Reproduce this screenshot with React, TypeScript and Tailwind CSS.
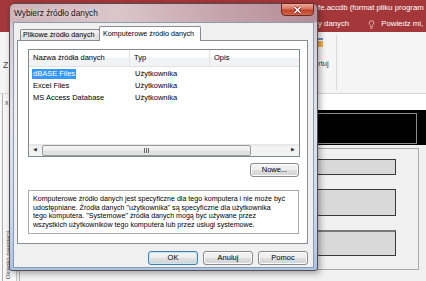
import { Lightbulb } from 'lucide-react';

// Win7-style push button used in the dialog
const DlgButton = ({ label, isDefault }: { label: string; isDefault?: boolean }) => (
  <div
    className={
      isDefault
        ? 'w-[50px] h-[14px] flex items-center justify-center rounded-[3px] border border-[#3c7fb1] shadow-[inset_0_0_0_1px_#c4e6f7] bg-[linear-gradient(180deg,#f4f4f4_0%,#ececec_50%,#dfdfdf_51%,#d3d3d3_100%)]'
      : 'w-[50px] h-[14px] flex items-center justify-center rounded-[3px] border border-[#8a8a8a] shadow-[inset_0_0_0_1px_#fbfbfb] bg-[linear-gradient(180deg,#f4f4f4_0%,#ececec_50%,#dfdfdf_51%,#d3d3d3_100%)]'
    }
  >
    {label}
  </div>
);

const rows = [
  { name: 'dBASE Files', type: 'Użytkownika', selected: true },
  { name: 'Excel Files', type: 'Użytkownika' },
  { name: 'MS Access Database', type: 'Użytkownika' },
];

const App = () => {
  return (
    <div className="relative w-[426px] h-[281px] overflow-hidden bg-[#f0f0f0] font-['Liberation_Sans',Arial,sans-serif] text-[7.5px] text-black">
      {/* Access window in the background */}
      <div className="flex flex-col h-full">
        <div className="h-[32px] bg-[#a4373a] text-white flex flex-col">
          <div className="h-[16px] pl-[318px] pt-[3px] text-[7.8px] leading-[10px] whitespace-nowrap">
            fe.accdb (format pliku program
          </div>
          <div className="h-[16px] pl-[318px] flex items-center gap-[6px] text-[7.8px] whitespace-nowrap">
            <span>y danych</span>
            <span className="ml-[12px] flex items-center gap-[5px]">
              <Lightbulb size={9} strokeWidth={1.6} />
              Powiedz mi,
            </span>
          </div>
        </div>

        <div className="h-[62px] bg-[#f5f5f5] border-b border-[#d5d5d5] flex">
          <div className="w-[10px] pl-[3px] pt-[27px] text-[8.5px] text-[#444]">Z</div>
          <div className="ml-[304px] pt-[4px] w-[22px] flex flex-col items-start">
            <svg width="10" height="14" viewBox="0 0 10 14">
              <rect x="2" y="2" width="7" height="2" fill="#6d8fb8" />
              <rect x="4" y="5" width="5" height="6" fill="#f0b143" />
              <path d="M0 7h4M2.5 5.5L4 7l-1.5 1.5" stroke="#2f6fb8" strokeWidth="1.2" fill="none" />
            </svg>
            <span className="mt-[8px] text-[7.5px] text-[#333] whitespace-nowrap">ortuj</span>
            <span className="text-[6px] text-[#555] leading-[8px]">▾</span>
          </div>
          <div className="w-px h-[55px] mt-[3px] bg-[#dadada]" />
        </div>

        <div className="flex-1 flex">
          {/* navigation pane (collapsed) */}
          <div className="w-[17px] bg-[#f7f7f7] border-r border-[#c6c6c6] flex flex-col">
            <div className="ml-[2px] flex-1 border-l border-[#b0b0b0] flex flex-col">
              <span className="pl-[2px] pt-[4px] text-[7px] text-[#555]">x</span>
              <span className="mt-auto mb-[2px] ml-[1px] [writing-mode:vertical-rl] rotate-180 text-[6px] text-[#444] whitespace-nowrap">
                Okienko nawigacji
              </span>
            </div>
          </div>
          <div className="w-[2px]" />
          <div className="flex-1 border-l border-[#b0b0b0] flex flex-col">
            <div className="h-[16px] bg-white" />
            <div className="h-[35px] bg-black pt-[3px] pr-[9px]">
              <div className="h-[31px] border border-[#8a8a8a]" />
            </div>
            <div className="pt-[3px] pr-[7px]">
              <div className="h-[122px] border border-[#a8a8a8] pt-[10px] pr-[22px] flex flex-col items-end gap-[14px]">
                <div className="w-[180px] h-[16px] bg-[#d9d9d9] border border-[#3a3a3a]" />
                <div className="w-[180px] h-[27px] bg-[#d9d9d9] border border-[#3a3a3a] border-t-dotted" />
                <div className="w-[180px] h-[26px] bg-[#d9d9d9] border border-[#3a3a3a] border-t-2 border-t-[#7a7a7a]" />
              </div>
            </div>
          </div>
        </div>
      </div>

      {/* Dialog window */}
      <div className="absolute left-[9px] top-[3px] w-[309px] h-[268px] rounded-t-[6px] rounded-b-[3px] border border-[#5a4a52] bg-[linear-gradient(180deg,#c9a9ae_0%,#d6cbd0_10%,#dde5ee_45%,#c6d8ec_80%,#a8c4e4_100%)] flex flex-col shadow-[2px_2px_6px_rgba(0,0,0,0.35)]">
        <div className="relative h-[18px] rounded-t-[5px] bg-[linear-gradient(90deg,rgba(205,178,182,0.9)_0%,rgba(220,200,204,0.9)_35%,rgba(196,160,168,0.9)_70%,rgba(178,136,146,0.9)_100%)] pl-[4px] flex items-center">
          <span className="text-[8.3px] text-[#111] [text-shadow:0_0_5px_rgba(255,255,255,0.9)] whitespace-nowrap">
            Wybierz źródło danych
          </span>
          <div className="absolute right-[3px] top-[-1px] w-[33px] h-[13px] rounded-b-[4px] border border-[#6d2a22] bg-[linear-gradient(180deg,#e9a898_0%,#d9735e_45%,#c2412a_55%,#d2664c_100%)] flex items-center justify-center">
            <svg width="9" height="8" viewBox="0 0 9 8">
              <path d="M1.5 1l6 6M7.5 1l-6 6" stroke="#5a1c14" strokeWidth="2.6" />
              <path d="M1.5 1l6 6M7.5 1l-6 6" stroke="#ffffff" strokeWidth="1.6" />
            </svg>
          </div>
        </div>

        {/* client area */}
        <div className="mx-[3px] h-[246px] border border-[#8c9bb0] bg-[#f0f0f0] px-[3px] pt-[3px] flex flex-col">
          {/* tab strip */}
          <div className="h-[14px] pl-[3px] flex items-end relative z-10 text-[7.2px]">
            <div className="w-[80px] h-[11px] border border-b-0 border-[#898c95] rounded-t-[2px] bg-[linear-gradient(180deg,#f3f3f3_0%,#ebebeb_50%,#dedede_51%,#e4e4e4_100%)] pl-[2px] leading-[10px] whitespace-nowrap overflow-hidden">
              Plikowe źródło danych
            </div>
            <div className="-ml-px w-[102px] h-[15px] -mb-px border border-b-0 border-[#898c95] rounded-t-[2px] bg-white pl-[3px] pt-[2px] leading-[10px] whitespace-nowrap">
              Komputerowe źródło danych
            </div>
          </div>

          {/* tab panel */}
          <div className="w-[291px] h-[204px] border border-[#898c95] bg-white pl-[10px] pr-[7px] pt-[8px] flex flex-col">
            {/* list view */}
            <div className="h-[108px] border border-[#828790] flex flex-col">
              <div className="h-[17px] flex border-b border-[#e2e3e5] bg-[linear-gradient(180deg,#ffffff_0%,#ffffff_45%,#f2f3f5_50%,#f2f3f5_100%)]">
                <div className="w-[101px] border-r border-[#e2e3e5] pl-[4px] flex items-center whitespace-nowrap">Nazwa źródła danych</div>
                <div className="w-[80px] border-r border-[#e2e3e5] pl-[4px] flex items-center">Typ</div>
                <div className="flex-1 pl-[4px] flex items-center">Opis</div>
              </div>
              <div className="flex-1 flex flex-col pt-px">
                {rows.map((r) => (
                  <div key={r.name} className="h-[12px] flex items-center">
                    <div className="w-[101px] pl-[3px] flex">
                      <span className={r.selected ? 'bg-[#3399ff] text-white px-px leading-[10px] whitespace-nowrap' : 'px-px leading-[10px] whitespace-nowrap'}>
                        {r.name}
                      </span>
                    </div>
                    <div className="w-[80px] pl-[5px]">{r.type}</div>
                  </div>
                ))}
              </div>
              {/* horizontal scrollbar */}
              <div className="h-[12px] flex items-center bg-[linear-gradient(180deg,#e5e5e5_0%,#f3f3f3_30%,#f3f3f3_100%)]">
                <div className="w-[12px] h-full flex items-center justify-center text-[5px] text-[#333]">◀</div>
                <div className="ml-px w-[209px] h-[11px] rounded-[2px] border border-[#9a9a9a] bg-[linear-gradient(180deg,#f6f6f6_0%,#ececec_50%,#dcdcdc_51%,#e4e4e4_100%)] flex items-center justify-center">
                  <div className="flex gap-px">
                    <div className="w-px h-[5px] bg-[#666]" />
                    <div className="w-px h-[5px] bg-[#666]" />
                    <div className="w-px h-[5px] bg-[#666]" />
                  </div>
                </div>
                <div className="flex-1" />
                <div className="w-[12px] h-full flex items-center justify-center text-[5px] text-[#333]">▶</div>
              </div>
            </div>

            <div className="mt-[6px] mr-px self-end w-[49px] h-[14px] flex items-center justify-center rounded-[3px] border border-[#8a8a8a] shadow-[inset_0_0_0_1px_#fbfbfb] bg-[linear-gradient(180deg,#f4f4f4_0%,#ececec_50%,#dfdfdf_51%,#d3d3d3_100%)]">
              Nowe...
            </div>

            <div className="mt-[13px] mr-px h-[44px] border border-[#a5acb5] pl-[4px] pt-[4px] text-[7.1px] leading-[8.7px] whitespace-nowrap overflow-hidden">
              <div>Komputerowe źródło danych jest specyficzne dla tego komputera i nie może być</div>
              <div>udostępniane. Źródła danych "użytkownika" są specyficzne dla użytkownika</div>
              <div>tego komputera. "Systemowe" źródła danych mogą być używane przez</div>
              <div>wszystkich użytkowników tego komputera lub przez usługi systemowe.</div>
            </div>
          </div>

          {/* dialog buttons */}
          <div className="mt-[7px] w-[291px] flex justify-end gap-[5px]">
            <DlgButton label="OK" isDefault />
            <DlgButton label="Anuluj" />
            <DlgButton label="Pomoc" />
          </div>
        </div>
      </div>
    </div>
  );
};

export default App;
